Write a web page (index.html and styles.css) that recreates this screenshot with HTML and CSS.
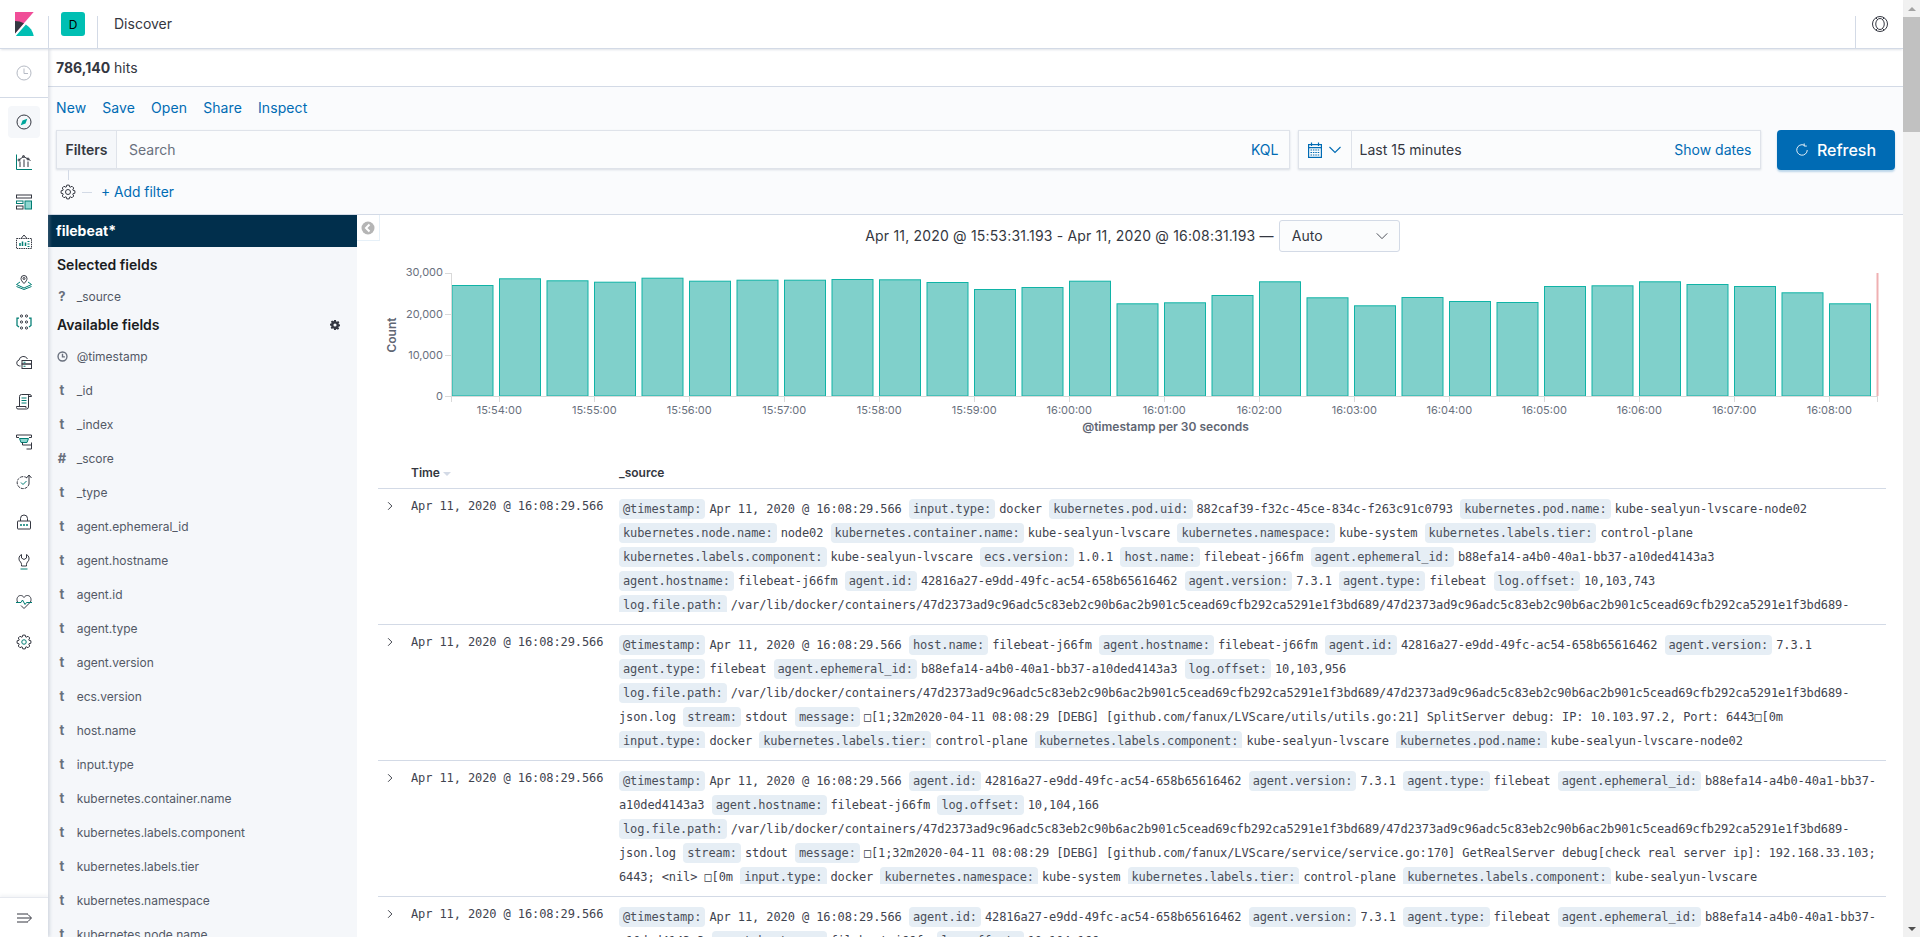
FILE: index.html
```html
<!DOCTYPE html>
<html lang="en">
<head>
<meta charset="utf-8">
<title>Discover - Kibana</title>
<link rel="stylesheet" href="styles.css">
</head>
<body>
<svg class="defs" width="0" height="0" aria-hidden="true">
  <symbol id="gear" viewBox="0 0 32 32">
    <path d="M29.79 18.43L25.87 19.59 25.52 20.44 27.47 24.03 24.03 27.47 20.44 25.52 19.59 25.87 18.43 29.79H13.57L12.41 25.87 11.56 25.52 7.97 27.47 4.53 24.03 6.48 20.44 6.13 19.59 2.21 18.43V13.57L6.13 12.41 6.48 11.56 4.53 7.97 7.97 4.53 11.56 6.48 12.41 6.13 13.57 2.21H18.43L19.59 6.13 20.44 6.48 24.03 4.53 27.47 7.97 25.52 11.56 25.87 12.41 29.79 13.57Z" fill="none" stroke="#343741" stroke-width="2" stroke-linejoin="round"/>
  </symbol>
</svg>
<div class="page">
  <header class="top">
    <a class="logo-cell">
      <svg class="logo" viewBox="0 0 32 32" width="24" height="24"><path fill="#F04E98" d="M4 0v28.789L28.935.017z"/><path fill="#343741" d="M4 12v16.789l11.906-13.738A24.721 24.721 0 0 0 4 12"/><path fill="#00BFB3" d="M18.479 16.664L6.268 30.754 5.202 32h23.833c-1.28-6.5-5.025-12.1-10.556-15.336"/></svg>
    </a>
    <div class="space-cell"><span class="avatar">D</span></div>
    <div class="crumb">Discover</div>
    <div class="help-cell">
      <svg class="ico" viewBox="0 0 32 32" width="16" height="16" fill="none" stroke="#343741" stroke-width="2"><circle cx="16" cy="16" r="15"/><ellipse cx="16" cy="16" rx="8.500" ry="11"/><path d="M8 4l4 4M24 4l-4 4M8 28l4-4M24 28l-4-4"/></svg>
    </div>
  </header>
  <div class="shell">
    <nav class="nav">
      <div class="nav-recent">
        <svg viewBox="0 0 32 32" width="16" height="16" fill="none" stroke="#b5bac4" stroke-width="2"><circle cx="16" cy="16" r="14"/><path d="M16 7v10h8"/></svg>
      </div>
      <ul class="nav-apps">
        <li class="nav-item active"><svg viewBox="0 0 32 32" width="16" height="16" fill="none" stroke="#343741" stroke-width="2"><circle cx="16" cy="16" r="14"/><path d="M22.500 9.500L13 13 9.500 22.500 19 19Z" fill="#00a69b" stroke="none"/></svg></li>
        <li class="nav-item"><svg viewBox="0 0 32 32" width="16" height="16" fill="none" stroke="#343741" stroke-width="2"><path d="M1 1v30h31" stroke="#017D73"/><path d="M8 15v11M16 11v15M24 15v11M6 12l9-7 9 5 5 3"/><circle cx="6" cy="12" r="2"/><circle cx="15" cy="5" r="2"/><circle cx="24" cy="10" r="2"/></svg></li>
        <li class="nav-item"><svg viewBox="0 0 32 32" width="16" height="16" fill="none" stroke="#343741" stroke-width="2"><rect x="1" y="2" width="30" height="6"/><rect x="1" y="24" width="13" height="6"/><rect x="1" y="14" width="13" height="5" stroke="#017D73"/><rect x="18" y="14" width="13" height="16" stroke="#017D73" fill="#8fd6d0"/></svg></li>
        <li class="nav-item"><svg viewBox="0 0 32 32" width="16" height="16" fill="none" stroke="#343741" stroke-width="2"><path d="M1 9h30v20H1Z" stroke-dasharray="3 1.500"/><path d="M10 9l6-7 6 7"/><path d="M8 24v-6M13 24v-9M19 24v-7" stroke="#017D73" stroke-width="3"/><path d="M23 15h4M23 20h4M23 25h4" stroke="#017D73"/></svg></li>
        <li class="nav-item"><svg viewBox="0 0 32 32" width="16" height="16" fill="none" stroke="#343741" stroke-width="2"><path d="M16 19c-4-4-6-7-6-10a6 6 0 0 1 12 0c0 3-2 6-6 10Z"/><circle cx="16" cy="9" r="2"/><path d="M8 16l-7 5 15 7 15-7-7-5" stroke="#017D73"/><path d="M1 25l15 6 15-6" stroke="#017D73"/></svg></li>
        <li class="nav-item"><svg viewBox="0 0 32 32" width="16" height="16" fill="none" stroke="#343741" stroke-width="2"><circle cx="11" cy="4" r="2.200"/><circle cx="21" cy="4" r="2.200"/><circle cx="11" cy="16" r="2.200"/><circle cx="21" cy="16" r="2.200"/><circle cx="11" cy="28" r="2.200"/><circle cx="21" cy="28" r="2.200"/><path d="M6 8H2v15l4 3M26 8h4v15l-4 3" stroke="#017D73" stroke-width="2.500"/></svg></li>
        <li class="nav-item"><svg viewBox="0 0 32 32" width="16" height="16" fill="none" stroke="#343741" stroke-width="2"><path d="M9 24H7a6 6 0 0 1-1-11.800A9 9 0 0 1 23 10"/><rect x="12" y="13" width="19" height="7"/><rect x="12" y="20" width="19" height="9"/><path d="M15 16.500h4M15 24.500h4" stroke="#017D73"/></svg></li>
        <li class="nav-item"><svg viewBox="0 0 32 32" width="16" height="16" fill="none" stroke="#343741" stroke-width="2"><path d="M7 25V5a4 4 0 0 1 4-4h16a4 4 0 0 1 4 4h-6M27 1a3 3 0 0 0-2 3v22a4 4 0 0 1-4 4H4a3 3 0 0 1-3-3v-2h19v3"/><path d="M11 8h10M11 13h10M11 18h10" stroke="#017D73"/></svg></li>
        <li class="nav-item"><svg viewBox="0 0 32 32" width="16" height="16" fill="none" stroke="#343741" stroke-width="2"><path d="M6 7H1V2h30v5h-5"/><path d="M7 9h18l-3 8H10Z" fill="#8fd6d0" stroke="#017D73"/><path d="M13 17v5h18v-5M31 22v8h-10"/></svg></li>
        <li class="nav-item"><svg viewBox="0 0 32 32" width="16" height="16" fill="none" stroke="#343741" stroke-width="2"><path d="M22 8a12 12 0 1 0 4 12" stroke-dasharray="6 2"/><path d="M26 20V3M21 8l5-6 5 6"/><path d="M10 17l4 4 7-7" stroke="#017D73"/></svg></li>
        <li class="nav-item"><svg viewBox="0 0 32 32" width="16" height="16" fill="none" stroke="#343741" stroke-width="2"><rect x="3" y="14" width="26" height="16" rx="1"/><path d="M9 14V9a7 7 0 0 1 14 0v5"/><path d="M10 20v4M16 20v4M22 20v4" stroke="#017D73" stroke-width="3"/></svg></li>
        <li class="nav-item"><svg viewBox="0 0 32 32" width="16" height="16" fill="none" stroke="#343741" stroke-width="2"><path d="M11 1a9 9 0 0 0-2 15c1.500 1.500 2 3 2 5v3h10v-3c0-2 .5-3.500 2-5a9 9 0 0 0-2-15v7l-5 3-5-3Z"/><path d="M9 30h14" stroke="#017D73"/></svg></li>
        <li class="nav-item"><svg viewBox="0 0 32 32" width="16" height="16" fill="none" stroke="#343741" stroke-width="2"><path d="M3 16C0 9 4 3 9 3c3 0 5 1 7 4 2-3 4-4 7-4 5 0 9 6 6 13L16 29l-6-6"/><path d="M0 17h10l3-5 5 9 3-4h11" stroke="#017D73"/></svg></li>
        <li class="nav-item"><svg viewBox="0 0 32 32" width="16" height="16" fill="none"><use href="#gear" width="32" height="32"/><circle cx="16" cy="16" r="4.500" stroke="#017D73" stroke-width="2"/></svg></li>
      </ul>
      <div class="nav-foot">
        <svg viewBox="0 0 32 32" width="16" height="16" fill="none" stroke="#343741" stroke-width="2"><path d="M2 8h22M2 16h28M2 24h22M24 9l7 7-7 7"/></svg>
      </div>
    </nav>
    <main class="main">
      <div class="hits"><strong>786,140</strong> hits</div>
      <section class="bar">
        <div class="menu"><a>New</a><a>Save</a><a>Open</a><a>Share</a><a>Inspect</a></div>
        <div class="query">
          <div class="search">
            <span class="prepend">Filters</span>
            <span class="placeholder">Search</span>
            <a class="kql">KQL</a>
          </div>
          <div class="date">
            <span class="date-btn">
              <svg viewBox="0 0 14 16" width="14" height="16" fill="none" stroke="#006BB4" stroke-width="1.200"><rect x=".6" y="2.600" width="12.800" height="12.800"/><path d="M.6 5.600h12.800M3.500 .5v3.500M10.500 .5v3.500"/><path d="M2.500 8h9M2.500 10.500h9M2.500 13h9" stroke-dasharray="1.500 .9"/></svg>
              <svg viewBox="0 0 12 8" width="12" height="8" fill="none" stroke="#006BB4" stroke-width="1.100"><path d="M.5 1l5.500 5.500L11.500 1"/></svg>
            </span>
            <span class="date-text">Last 15 minutes</span>
            <a class="date-show">Show dates</a>
          </div>
          <button class="refresh" type="button">
            <svg viewBox="0 0 16 16" width="14" height="14" fill="none" stroke="#fff"><path d="M10.500 2.500a6 6 0 1 0 3.500 5.500M10.500 .5v3h3"/></svg>
            <span>Refresh</span>
          </button>
        </div>
        <div class="filters">
          <span class="filter-gear"><svg viewBox="0 0 32 32" width="16" height="16" fill="none"><use href="#gear" width="32" height="32"/><circle cx="16" cy="16" r="5" stroke="#343741" stroke-width="2"/></svg></span>
          <span class="dash"></span>
          <a class="add">+ Add filter</a>
        </div>
      </section>
      <div class="discover">
        <aside class="side">
          <div class="index">filebeat*</div>
          <h3 class="side-h">Selected fields</h3>
          <div class="field"><b>?</b><span>_source</span></div>
          <h3 class="side-h side-h2">Available fields
            <svg class="avail-gear" viewBox="0 0 16 16" width="10" height="10"><path fill="#343741" d="M6.500 0h3l.4 2.200 1.300.6L13 1.500 15 3.600l-1.300 1.800.5 1.300 2 .4v3l-2.200.4-.6 1.300 1.300 1.800-2.100 2-1.800-1.200-1.300.5L9.500 16h-3l-.4-2.200-1.300-.6L3 14.500 1 12.400l1.300-1.800-.5-1.300-2-.4v-3l2.200-.4.600-1.300L1.300 2.800 3.400.8l1.800 1.200 1-.4ZM8 5.500a2.500 2.500 0 1 0 0 5 2.500 2.500 0 0 0 0-5Z"/></svg>
          </h3>
          <div class="field"><b><svg viewBox="0 0 16 16" width="11" height="11" fill="none" stroke="#69707D" stroke-width="2"><circle cx="8" cy="8" r="6.500"/><path d="M8 4v4.500h3.500"/></svg></b><span>@timestamp</span></div>
          <div class="field"><b>t</b><span>_id</span></div>
          <div class="field"><b>t</b><span>_index</span></div>
          <div class="field"><b>#</b><span>_score</span></div>
          <div class="field"><b>t</b><span>_type</span></div>
          <div class="field"><b>t</b><span>agent.ephemeral_id</span></div>
          <div class="field"><b>t</b><span>agent.hostname</span></div>
          <div class="field"><b>t</b><span>agent.id</span></div>
          <div class="field"><b>t</b><span>agent.type</span></div>
          <div class="field"><b>t</b><span>agent.version</span></div>
          <div class="field"><b>t</b><span>ecs.version</span></div>
          <div class="field"><b>t</b><span>host.name</span></div>
          <div class="field"><b>t</b><span>input.type</span></div>
          <div class="field"><b>t</b><span>kubernetes.container.name</span></div>
          <div class="field"><b>t</b><span>kubernetes.labels.component</span></div>
          <div class="field"><b>t</b><span>kubernetes.labels.tier</span></div>
          <div class="field"><b>t</b><span>kubernetes.namespace</span></div>
          <div class="field"><b>t</b><span>kubernetes.node.name</span></div>
        </aside>
        <div class="content">
          <button class="collapse" type="button" aria-label="Collapse"><svg viewBox="0 0 14 14" width="14" height="14"><circle cx="7" cy="7" r="6.500" fill="#b5b5b5"/><path d="M8.500 3.500L5 7l3.500 3.500" fill="none" stroke="#fff" stroke-width="2"/></svg></button>
          <div class="range">
            <span class="range-text">Apr 11, 2020 @ 15:53:31.193 - Apr 11, 2020 @ 16:08:31.193 —</span>
            <span class="select">Auto<svg viewBox="0 0 16 16" width="14" height="14" fill="none" stroke="#343741"><path d="M2 5l6 6 6-6"/></svg></span>
          </div>
          <svg class="chart" viewBox="357 252 1546 204" width="1546" height="204">
            <g class="bars">
              <rect x="452" y="285.500" width="41" height="110.500"/><rect x="499.500" y="278.800" width="41" height="117.200"/><rect x="547" y="280.800" width="41" height="115.200"/><rect x="594.500" y="282.200" width="41" height="113.800"/><rect x="642" y="278.200" width="41" height="117.800"/><rect x="689.500" y="281.200" width="41" height="114.800"/><rect x="737" y="280.200" width="41" height="115.800"/><rect x="784.500" y="280.200" width="41" height="115.800"/><rect x="832" y="279.500" width="41" height="116.500"/><rect x="879.500" y="279.800" width="41" height="116.200"/>
              <rect x="927" y="282.500" width="41" height="113.500"/><rect x="974.500" y="289.500" width="41" height="106.500"/><rect x="1022" y="287.500" width="41" height="108.500"/><rect x="1069.500" y="281.200" width="41" height="114.800"/><rect x="1117" y="303.800" width="41" height="92.200"/><rect x="1164.500" y="302.800" width="41" height="93.200"/><rect x="1212" y="295.500" width="41" height="100.500"/><rect x="1259.500" y="281.800" width="41" height="114.200"/><rect x="1307" y="297.800" width="41" height="98.200"/><rect x="1354.500" y="305.800" width="41" height="90.200"/>
              <rect x="1402" y="297.500" width="41" height="98.500"/><rect x="1449.500" y="301.500" width="41" height="94.500"/><rect x="1497" y="302.500" width="41" height="93.500"/><rect x="1544.500" y="286.500" width="41" height="109.500"/><rect x="1592" y="285.800" width="41" height="110.200"/><rect x="1639.500" y="281.800" width="41" height="114.200"/><rect x="1687" y="284.500" width="41" height="111.500"/><rect x="1734.500" y="286.500" width="41" height="109.500"/><rect x="1782" y="292.800" width="41" height="103.200"/><rect x="1829.500" y="303.800" width="41" height="92.200"/>
            </g>
            <path class="now" d="M1877.500 273V396"/>
            <path class="axis" d="M451.500 273V402M445 273.500h6M445 314.500h6M445 355.500h6M445 396.500h1432.500M499.500 396v6M594.500 396v6M689.500 396v6M784.500 396v6M879.500 396v6M974.500 396v6M1069.500 396v6M1164.500 396v6M1259.500 396v6M1354.500 396v6M1449.500 396v6M1544.500 396v6M1639.500 396v6M1734.500 396v6M1829.500 396v6M1877.500 396v6"/>
            <g class="ylab">
              <text x="443" y="276">30,000</text><text x="443" y="318">20,000</text><text x="443" y="359">10,000</text><text x="443" y="400">0</text>
            </g>
            <g class="xlab">
              <text x="499.300" y="414">15:54:00</text><text x="594.300" y="414">15:55:00</text><text x="689.300" y="414">15:56:00</text><text x="784.300" y="414">15:57:00</text><text x="879.300" y="414">15:58:00</text><text x="974.300" y="414">15:59:00</text><text x="1069.300" y="414">16:00:00</text><text x="1164.300" y="414">16:01:00</text><text x="1259.300" y="414">16:02:00</text><text x="1354.300" y="414">16:03:00</text><text x="1449.300" y="414">16:04:00</text><text x="1544.300" y="414">16:05:00</text><text x="1639.300" y="414">16:06:00</text><text x="1734.300" y="414">16:07:00</text><text x="1829.300" y="414">16:08:00</text>
            </g>
            <text class="axis-title" x="1165.500" y="431">@timestamp per 30 seconds</text>
            <text class="axis-title" transform="translate(396 335) rotate(-90)">Count</text>
          </svg>
          <div class="table">
            <div class="thead"><span class="th-time">Time<i class="caret"></i></span><span class="th-src">_source</span></div>

            <div class="row">
              <span class="chev"><svg viewBox="0 0 16 16" width="10" height="10" fill="none" stroke="#343741" stroke-width="1.500"><path d="M5 2l6 6-6 6"/></svg></span>
              <span class="time">Apr 11, 2020 @ 16:08:29.566</span>
              <div class="cell"><dl class="src">
                <dt>@timestamp:</dt><dd>Apr 11, 2020 @ 16:08:29.566</dd> <dt>input.type:</dt><dd>docker</dd> <dt>kubernetes.pod.uid:</dt><dd>882caf39-f32c-45ce-834c-f263c91c0793</dd> <dt>kubernetes.pod.name:</dt><dd>kube-sealyun-lvscare-node02</dd> <dt>kubernetes.node.name:</dt><dd>node02</dd> <dt>kubernetes.container.name:</dt><dd>kube-sealyun-lvscare</dd> <dt>kubernetes.namespace:</dt><dd>kube-system</dd> <dt>kubernetes.labels.tier:</dt><dd>control-plane</dd> <dt>kubernetes.labels.component:</dt><dd>kube-sealyun-lvscare</dd> <dt>ecs.version:</dt><dd>1.0.1</dd> <dt>host.name:</dt><dd>filebeat-j66fm</dd> <dt>agent.ephemeral_id:</dt><dd>b88efa14-a4b0-40a1-bb37-a10ded4143a3</dd> <dt>agent.hostname:</dt><dd>filebeat-j66fm</dd> <dt>agent.id:</dt><dd>42816a27-e9dd-49fc-ac54-658b65616462</dd> <dt>agent.version:</dt><dd>7.3.1</dd> <dt>agent.type:</dt><dd>filebeat</dd> <dt>log.offset:</dt><dd>10,103,743</dd> <dt>log.file.path:</dt><dd>/var/lib/docker/containers/47d2373ad9c96adc5c83eb2c90b6ac2b901c5cead69cfb292ca5291e1f3bd689/47d2373ad9c96adc5c83eb2c90b6ac2b901c5cead69cfb292ca5291e1f3bd689-json.log</dd>
              </dl></div>
            </div>

            <div class="row">
              <span class="chev"><svg viewBox="0 0 16 16" width="10" height="10" fill="none" stroke="#343741" stroke-width="1.500"><path d="M5 2l6 6-6 6"/></svg></span>
              <span class="time">Apr 11, 2020 @ 16:08:29.566</span>
              <div class="cell"><dl class="src">
                <dt>@timestamp:</dt><dd>Apr 11, 2020 @ 16:08:29.566</dd> <dt>host.name:</dt><dd>filebeat-j66fm</dd> <dt>agent.hostname:</dt><dd>filebeat-j66fm</dd> <dt>agent.id:</dt><dd>42816a27-e9dd-49fc-ac54-658b65616462</dd> <dt>agent.version:</dt><dd>7.3.1</dd> <dt>agent.type:</dt><dd>filebeat</dd> <dt>agent.ephemeral_id:</dt><dd>b88efa14-a4b0-40a1-bb37-a10ded4143a3</dd> <dt>log.offset:</dt><dd>10,103,956</dd> <dt>log.file.path:</dt><dd>/var/lib/docker/containers/47d2373ad9c96adc5c83eb2c90b6ac2b901c5cead69cfb292ca5291e1f3bd689/47d2373ad9c96adc5c83eb2c90b6ac2b901c5cead69cfb292ca5291e1f3bd689-json.log</dd> <dt>stream:</dt><dd>stdout</dd> <dt>message:</dt><dd>□[1;32m2020-04-11 08:08:29 [DEBG] [github.com/fanux/LVScare/utils/utils.go:21] SplitServer debug: IP: 10.103.97.2, Port: 6443□[0m</dd> <dt>input.type:</dt><dd>docker</dd> <dt>kubernetes.labels.tier:</dt><dd>control-plane</dd> <dt>kubernetes.labels.component:</dt><dd>kube-sealyun-lvscare</dd> <dt>kubernetes.pod.name:</dt><dd>kube-sealyun-lvscare-node02</dd>
              </dl></div>
            </div>

            <div class="row">
              <span class="chev"><svg viewBox="0 0 16 16" width="10" height="10" fill="none" stroke="#343741" stroke-width="1.500"><path d="M5 2l6 6-6 6"/></svg></span>
              <span class="time">Apr 11, 2020 @ 16:08:29.566</span>
              <div class="cell"><dl class="src">
                <dt>@timestamp:</dt><dd>Apr 11, 2020 @ 16:08:29.566</dd> <dt>agent.id:</dt><dd>42816a27-e9dd-49fc-ac54-658b65616462</dd> <dt>agent.version:</dt><dd>7.3.1</dd> <dt>agent.type:</dt><dd>filebeat</dd> <dt>agent.ephemeral_id:</dt><dd>b88efa14-a4b0-40a1-bb37-a10ded4143a3</dd> <dt>agent.hostname:</dt><dd>filebeat-j66fm</dd> <dt>log.offset:</dt><dd>10,104,166</dd> <dt>log.file.path:</dt><dd>/var/lib/docker/containers/47d2373ad9c96adc5c83eb2c90b6ac2b901c5cead69cfb292ca5291e1f3bd689/47d2373ad9c96adc5c83eb2c90b6ac2b901c5cead69cfb292ca5291e1f3bd689-json.log</dd> <dt>stream:</dt><dd>stdout</dd> <dt>message:</dt><dd>□[1;32m2020-04-11 08:08:29 [DEBG] [github.com/fanux/LVScare/service/service.go:170] GetRealServer debug[check real server ip]: 192.168.33.103; 6443; &lt;nil&gt; □[0m</dd> <dt>input.type:</dt><dd>docker</dd> <dt>kubernetes.namespace:</dt><dd>kube-system</dd> <dt>kubernetes.labels.tier:</dt><dd>control-plane</dd> <dt>kubernetes.labels.component:</dt><dd>kube-sealyun-lvscare</dd>
              </dl></div>
            </div>

            <div class="row">
              <span class="chev"><svg viewBox="0 0 16 16" width="10" height="10" fill="none" stroke="#343741" stroke-width="1.500"><path d="M5 2l6 6-6 6"/></svg></span>
              <span class="time">Apr 11, 2020 @ 16:08:29.566</span>
              <div class="cell"><dl class="src">
                <dt>@timestamp:</dt><dd>Apr 11, 2020 @ 16:08:29.566</dd> <dt>agent.id:</dt><dd>42816a27-e9dd-49fc-ac54-658b65616462</dd> <dt>agent.version:</dt><dd>7.3.1</dd> <dt>agent.type:</dt><dd>filebeat</dd> <dt>agent.ephemeral_id:</dt><dd>b88efa14-a4b0-40a1-bb37-a10ded4143a3</dd> <dt>agent.hostname:</dt><dd>filebeat-j66fm</dd> <dt>log.offset:</dt><dd>10,104,166</dd>
              </dl></div>
            </div>
          </div>
        </div>
      </div>
    </main>
  </div>
</div>
<div class="scrollbar">
  <span class="sb-btn"><i class="sb-up"></i></span>
  <span class="sb-thumb"></span>
  <span class="sb-track"></span>
  <span class="sb-btn"><i class="sb-down"></i></span>
</div>
</body>
</html>
```

FILE: styles.css
```css
* { box-sizing: border-box; }
html, body { height: 100%; }
body {
  margin: 0;
  height: 937px;
  display: flex;
  overflow: hidden;
  font-family: Inter, "Liberation Sans", sans-serif;
  font-size: 14px;
  color: #343741;
  background: #fff;
}
.defs { position: absolute; }
a { color: #006BB4; text-decoration: none; }
svg { display: block; }

.page { width: 1903px; height: 937px; display: flex; flex-direction: column; }

/* top header */
.top {
  height: 49px;
  flex: none;
  display: flex;
  border-bottom: 1px solid #d3dae6;
  box-shadow: 0 2px 2px -1px rgba(152,162,179,.3);
  position: relative;
  z-index: 3;
  background: #fff;
}
.logo-cell { width: 48px; display: flex; align-items: center; justify-content: center; }
.space-cell { width: 49px; border-left: 1px solid #d3dae6; margin-top: 16px; height: 32px; position: relative; }
.avatar {
  position: absolute; top: -4px; left: 12px;
  width: 24px; height: 24px; border-radius: 3px; background: #00BFB3;
  color: #000; font-size: 12px; display: flex; align-items: center; justify-content: center;
}
.crumb { flex: 1; display: flex; align-items: flex-start; border-left: 1px solid #d3dae6; margin-top: 16px; height: 32px; padding-left: 16px; line-height: 16px; }
.help-cell { width: 48px; margin-top: 16px; height: 32px; border-left: 1px solid #d3dae6; padding-left: 16px; }

.shell { flex: 1; display: flex; min-height: 0; }

/* left nav */
.nav {
  width: 48px; flex: none; display: flex; flex-direction: column;
  background: #fff; position: relative; z-index: 2;
  box-shadow: 2px 0 3px rgba(152,162,179,.3);
}
.nav-recent { height: 49px; flex: none; border-bottom: 1px solid #d3dae6; display: flex; align-items: center; justify-content: center; }
.nav-apps { list-style: none; margin: 4px 0 0; padding: 0; flex: 1; }
.nav-item { height: 40px; display: flex; align-items: center; justify-content: center; position: relative; }
.nav-item.active::before { content: ""; position: absolute; left: 8px; top: 4px; width: 32px; height: 32px; border-radius: 4px; background: #f5f7fa; }
.nav-item svg { position: relative; }
.nav-foot { height: 40px; flex: none; border-top: 1px solid #e6e9ef; display: flex; align-items: center; justify-content: center; box-shadow: 0 -2px 3px rgba(152,162,179,.12); }

/* main */
.main { flex: 1; min-width: 0; display: flex; flex-direction: column; }
.hits { height: 38px; flex: none; border-bottom: 1px solid #d3dae6; padding-left: 8px; line-height: 37px; }
.hits strong { font-weight: 700; }

.bar { height: 128px; flex: none; background: #fafbfd; border-bottom: 1px solid #d3dae6; padding: 0 8.5px 0 8px; }
.menu { height: 43px; padding-bottom: 3px; display: flex; gap: 16px; align-items: center; letter-spacing: .1px; }
.query { height: 40px; display: flex; }
.search {
  flex: 1; height: 39px; display: flex; align-items: center; background: #fbfcfd;
  border: 1px solid #dfe3ea; box-shadow: 0 1px 2px rgba(152,162,179,.35);
}
.prepend { width: 60px; height: 100%; background: #f5f7fa; border-right: 1px solid #dfe3ea; display: flex; align-items: center; justify-content: center; font-weight: 600; }
.placeholder { flex: 1; padding-left: 12px; color: #69707D; }
.kql { padding-right: 10px; }
.date {
  width: 463px; margin-left: 8px; height: 39px; display: flex; align-items: center; background: #fbfcfd;
  border: 1px solid #dfe3ea; box-shadow: 0 1px 2px rgba(152,162,179,.35);
}
.date-btn { width: 53px; height: 100%; display: flex; align-items: center; padding-left: 9px; gap: 7px; border-right: 1px solid #dfe3ea; }
.date-text { flex: 1; padding-left: 8px; }
.date-show { padding-right: 8px; color: #006BB4; }
.refresh {
  width: 118px; margin-left: 16px; height: 40px; border: 0; border-radius: 4px; background: #006BB4; color: #fff;
  font: 500 16px Inter, sans-serif; display: flex; align-items: center; justify-content: center; gap: 8px;
  box-shadow: 0 2px 2px rgba(0,107,180,.25);
}
.filters { height: 44px; display: flex; align-items: center; padding-left: 4px; position: relative; }
.filter-gear::before { content: ""; position: absolute; left: 12px; top: 0; height: 10px; width: 1px; background: #d3dae6; }
.filter-gear { display: block; }
.dash { width: 10px; height: 1px; background: #d3dae6; margin: 0 9px 0 6px; }
.add { font-size: 13.8px; }

/* discover */
.discover { flex: 1; min-height: 0; display: flex; overflow: hidden; }
.side { width: 309px; flex: none; background: #f5f7fa; overflow: hidden; }
.index { height: 32px; background: #012F4C; color: #fff; font-weight: 700; line-height: 32px; padding-left: 8px; }
.side-h { margin: 5px 0 0; height: 27px; line-height: 26px; padding-left: 9px; font-size: 14px; font-weight: 600; color: #1a1c21; position: relative; }
.side-h2 { margin: 0; height: 26px; line-height: 24px; }
.avail-gear { position: absolute; right: 17px; top: 7px; }
.field { height: 34px; display: flex; align-items: center; font-size: 12px; color: #535966; }
.field b { width: 12px; margin: 0 8.7px 0 8px; font-size: 13px; font-weight: 700; color: #69707D; display: flex; justify-content: center; flex: none; }
.field b svg { margin-top: 1px; }

.content { flex: 1; min-width: 0; position: relative; }
.collapse {
  position: absolute; left: 0; top: 0; width: 23px; height: 26px; padding: 0; display: flex; align-items: center; justify-content: center;
  background: #fff; border: 1px solid #e6f0f8; border-width: 0 1px 1px 0;
}
.range { height: 37px; padding: 4px 0 0 5px; display: flex; justify-content: center; align-items: center; gap: 5px; }
.range-text { letter-spacing: .18px; }
.select {
  width: 121px; height: 32px; background: #fbfcfd; border: 1px solid #d3dae6; border-radius: 3px;
  display: flex; align-items: center; justify-content: space-between; padding: 0 10px 0 12px;
}
.chart { display: block; }
.bars rect { fill: #80d0cb; stroke: #10b3a6; stroke-width: 1; }
.now { stroke: #efb0b2; stroke-width: 2; fill: none; }
.axis { stroke: #d9d9d9; fill: none; stroke-width: 1; }
.ylab text { font: 11px Inter, sans-serif; fill: #69707D; text-anchor: end; }
.xlab text { font: 11px Inter, sans-serif; fill: #69707D; text-anchor: middle; }
.axis-title { font: 600 12px Inter, sans-serif; fill: #5f6673; text-anchor: middle; }

.table { margin: 0 17px 0 21px; }
.thead { height: 33px; border-bottom: 1px solid #d3dae6; display: flex; align-items: center; font-size: 12px; font-weight: 600; }
.th-time { margin-left: 33px; width: 208px; display: flex; align-items: center; }
.caret { width: 0; height: 0; margin: 3px 0 0 3px; border: 4px solid transparent; border-top: 4px solid #d3dae6; border-bottom: 0; }
.th-src { font-weight: 600; }
.row { height: 136px; display: grid; grid-template-columns: 33px 208px 1fr; border-bottom: 1px solid #d3dae6; padding-top: 8px; font: 12px "DejaVu Sans Mono", monospace; letter-spacing: -.1px; }
.chev { padding: 4px 0 0 7px; }
.time { line-height: 18px; color: #3f444f; }
.cell { padding-right: 5px; min-width: 0; }
.src { margin: 0; max-height: 115px; overflow: hidden; word-break: break-word; line-height: 24px; }
.src dt, .src dd { display: inline; margin: 0; }
.src dt { background: #e6eef5; padding: 3px 4px; margin-right: 4px; border-radius: 4px; color: #4a4f5a; word-break: normal; }
.src dd { color: #3f444f; }

/* scrollbar */
.scrollbar { width: 17px; flex: none; height: 937px; background: #f1f1f1; display: flex; flex-direction: column; }
.sb-btn { height: 17px; display: flex; align-items: center; justify-content: center; flex: none; }
.sb-up { border: 4px solid transparent; border-bottom: 4px solid #a3a3a3; border-top: 0; }
.sb-down { border: 4px solid transparent; border-top: 4px solid #505050; border-bottom: 0; }
.sb-thumb { height: 115px; background: #c1c1c1; flex: none; }
.sb-track { flex: 1; }
```
